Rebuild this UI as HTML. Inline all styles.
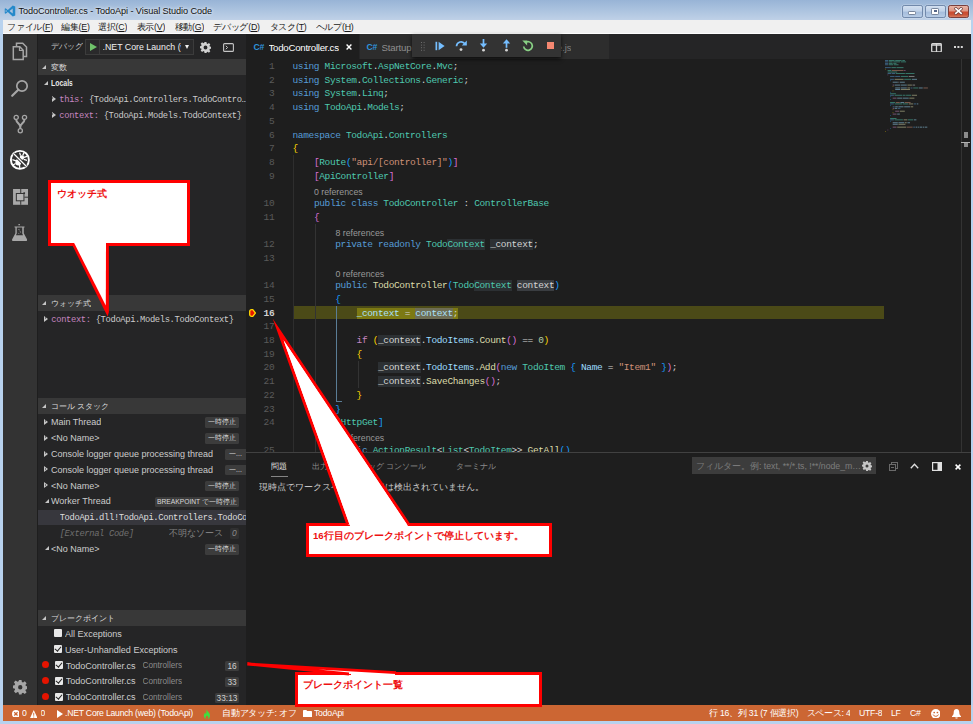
<!DOCTYPE html>
<html lang="ja">
<head>
<meta charset="utf-8">
<title>TodoController.cs - TodoApi - Visual Studio Code</title>
<style>
*{box-sizing:border-box;margin:0;padding:0}
html,body{width:973px;height:724px;overflow:hidden;background:#b8d2ee}
body{font-family:"Liberation Sans",sans-serif;font-size:9.4px;color:#ccc;position:relative}
.abs,.t,.m{position:absolute}
.t,.m{white-space:nowrap;line-height:16px;height:16px;overflow:hidden}
.m{font-family:"Liberation Mono",monospace}

/* ---------- window chrome ---------- */
#titlebar{left:0;top:0;width:973px;height:20px;background:linear-gradient(#98b4d6 0%,#a9c1de 45%,#bfd1e7 100%)}
#menubar{left:2.8px;top:19.8px;width:967.8px;height:14.2px;background:#f0f0f0;border-bottom:1px solid #fdfdfd}
#title{left:18.5px;top:3px;font-size:9.2px;color:#111;letter-spacing:-.1px;text-shadow:0 0 3px rgba(255,255,255,.9),0 0 5px rgba(255,255,255,.6);overflow:visible}
.menu{top:18.5px;color:#1a1a1a;font-size:8.8px;letter-spacing:-.2px}
.wbtn{top:5.3px;height:12.3px;border:1px solid #7189ab;border-radius:2.2px;background:linear-gradient(#d3e0f0 0%,#bfd1e8 48%,#a5bddc 54%,#b6cbe5 100%);box-shadow:0 0 0 .6px rgba(255,255,255,.35)}

/* ---------- main areas ---------- */
#vsc{left:2.8px;top:34px;width:967.8px;height:687px;background:#1e1e1e;overflow:hidden}
#activity{left:2.8px;top:34px;width:34.7px;height:672px;background:#333}
#sidebar{left:37.5px;top:34px;width:208.5px;height:672px;background:#252526;overflow:hidden}
#editor{left:246px;top:34px;width:724.6px;height:419px;background:#1e1e1e;overflow:hidden}
#panel{left:246px;top:452px;width:724.6px;height:254px;background:#1e1e1e;border-top:1px solid #414141}
#status{left:2.8px;top:705px;width:967.8px;height:16px;background:#cc6633}

/* ---------- activity bar ---------- */
.ico{position:absolute;fill:none;stroke:#a6a6a6;stroke-width:1.5;overflow:visible}
/* ---------- sidebar ---------- */
.hdr{position:absolute;left:37.5px;width:208.5px;height:16px;background:#383838}
.hdr .t{left:13.5px;top:.8px;color:#ddd;font-size:7.9px}
.tw{position:absolute;width:0;height:0;border-style:solid}
.tw.open{border-width:0 0 4.5px 4.5px;border-color:transparent transparent #c5c5c5 transparent}
.tw.closed{border-width:3.4px 0 3.4px 4px;border-color:transparent transparent transparent #c5c5c5}
.tw.closed:after{content:"";position:absolute;left:-3.3px;top:-1.6px;border-style:solid;border-width:1.6px 0 1.6px 1.9px;border-color:transparent transparent transparent #252526}
.sm{font-size:8.8px;letter-spacing:-.35px;color:#ccc;margin-top:.8px}
.pk{color:#c586c0}
.badge{position:absolute;height:10.5px;line-height:10.8px;margin-top:.5px;background:#3c3c3c;color:#dadada;font-size:7.1px;border-radius:1.5px;text-align:center;white-space:nowrap;overflow:hidden}
.cb{position:absolute;width:8px;height:8px;background:#e8e8e8;border-radius:1px}
.cb.on:after{content:"";position:absolute;left:2.4px;top:.2px;width:2.6px;height:5px;border:solid #222;border-width:0 1.5px 1.5px 0;transform:rotate(40deg)}
.bp{position:absolute;width:7px;height:7px;border-radius:50%;background:#e51400}
.dim{color:#8c8c8c}
.cs9{font-size:9px}
.bp9{font-size:9.05px}
.num{font-size:8.3px;color:#d0d0d0}

/* ---------- editor ---------- */
#tabs{left:246px;top:34px;width:724.6px;height:25px;background:#252526}
.tab{position:absolute;top:34px;height:25px}
.cs{position:absolute;font-size:8.7px;font-weight:bold;color:#2f93dc;letter-spacing:-.3px;line-height:16px}
.ln{position:absolute;left:246px;width:28.3px;text-align:right;font-family:"Liberation Mono",monospace;font-size:9.5px;letter-spacing:-.36px;color:#5a5a5a;height:13.7px;line-height:13.7px;top:calc(60px + var(--r)*13.7px)}
.cl{position:absolute;left:292.5px;font-family:"Liberation Mono",monospace;font-size:9.5px;letter-spacing:-.36px;color:#d4d4d4;white-space:pre;height:13.7px;line-height:13.7px;top:calc(60px + var(--r)*13.7px)}
.lens{position:absolute;font-size:8.75px;color:#999;white-space:nowrap;height:13.7px;line-height:13.7px;top:calc(62.3px + var(--r)*13.7px)}
.ig{position:absolute;width:1px;background:#333;top:calc(59.5px + var(--r)*13.7px);height:calc(var(--n)*13.7px)}
.k{color:#569cd6}.ty{color:#4ec9b0}.s{color:#ce9178}.n{color:#b5cea8}.c{color:#c586c0}.v{color:#9cdcfe}.f{color:#dcdcaa}
.b1{color:#ffd700}.b2{color:#da70d6}.b3{color:#179fff}
.hl{background:#2c3033}

/* ---------- panel / status / callouts ---------- */
.pt{font-size:8.4px;color:#8a8a8a;top:458px}
.st{color:#fff;font-size:8.7px;letter-spacing:-.24px;top:706px;line-height:15.5px;height:15.5px}
.call{position:absolute;background:#fff;border:3px solid #ff0000}
.ct{position:absolute;color:#ee1111;font-weight:bold;font-size:9.6px;white-space:nowrap;line-height:12px}
</style>
</head>
<body>

<!-- ================= WINDOW CHROME ================= -->
<div id="titlebar" class="abs"></div>
<svg class="abs" style="left:4px;top:5px" width="12" height="12" viewBox="0 0 24 24"><path fill="#2489ca" d="M17.5 1 7.6 10 3.3 6.7 1.5 7.6v8.8l1.8.9 4.3-3.3 9.9 9 5-2V3zM3.4 14.6V9.4L6 12zM17.4 16.9 11 12l6.4-4.9z"/></svg>
<div id="title" class="t">TodoController.cs - TodoApi - Visual Studio Code</div>
<div class="abs wbtn" style="left:902.2px;width:20.6px"></div>
<div class="abs" style="left:908.4px;top:11px;width:8px;height:3.6px;background:#fff;border:.9px solid #76849a;border-radius:1.2px"></div>
<div class="abs wbtn" style="left:924.9px;width:20.9px"></div>
<div class="abs" style="left:931.3px;top:8px;width:7.6px;height:6.6px;background:#fff;border:.9px solid #76849a;border-radius:1.2px"></div>
<div class="abs" style="left:933.6px;top:10.2px;width:3px;height:2.2px;background:#7d98c2;border:.6px solid #55678a"></div>
<div class="abs wbtn" style="left:947.6px;width:21.4px;border-color:#7a3f3c;background:linear-gradient(#e9b5a6 0%,#dc9482 47%,#cc4a2f 53%,#c9553a 80%,#d87e62 100%)"></div>
<svg class="abs" style="left:954px;top:7.3px" width="9" height="8" viewBox="0 0 10 9"><path d="M2 1.8 8 7.2M8 1.8 2 7.2" stroke="#6a3a36" stroke-width="3.4" stroke-linecap="square"/><path d="M2 1.8 8 7.2M8 1.8 2 7.2" stroke="#fff" stroke-width="1.9" stroke-linecap="square"/></svg>

<div id="menubar" class="abs"></div>
<div class="t menu" style="left:7px">ファイル(<u>F</u>)</div>
<div class="t menu" style="left:61px">編集(<u>E</u>)</div>
<div class="t menu" style="left:98px">選択(<u>C</u>)</div>
<div class="t menu" style="left:136.5px">表示(<u>V</u>)</div>
<div class="t menu" style="left:174.5px">移動(<u>G</u>)</div>
<div class="t menu" style="left:213px">デバッグ(<u>D</u>)</div>
<div class="t menu" style="left:269.5px">タスク(<u>T</u>)</div>
<div class="t menu" style="left:315.5px">ヘルプ(<u>H</u>)</div>
<div id="vsc" class="abs"></div>
<div id="activity" class="abs"></div>
<!-- files -->
<svg class="ico" style="left:12px;top:42px" width="16" height="19" viewBox="0 0 16 19"><path d="M4.5 4V1.2h6.2l3.8 3.8v9.5h-3"/><path d="M1.3 4.8h6.5l3.4 3.4v9.3H1.3z"/><path d="M7.5 5v3.5h3.5" stroke-width="1.2"/></svg>
<!-- search -->
<svg class="ico" style="left:10px;top:78px" width="20" height="20" viewBox="0 0 20 20"><circle cx="12" cy="8" r="5.2" stroke-width="1.7"/><path d="M8.3 11.7 2.2 17.8" stroke-width="2.2" stroke-linecap="round"/></svg>
<!-- git -->
<svg class="ico" style="left:12px;top:113px" width="17" height="22" viewBox="0 0 17 22"><circle cx="4.2" cy="4.4" r="2.1" stroke-width="1.3"/><circle cx="12.5" cy="4.4" r="2.1" stroke-width="1.3"/><circle cx="8.3" cy="17.8" r="2.1" stroke-width="1.3"/><path d="M4.2 6.5c0 3.5 4.1 4 4.1 7.5v1.7M12.5 6.5c0 3.5-4.2 4-4.2 7.5" stroke-width="2"/></svg>
<!-- debug (active) -->
<svg class="ico" style="left:9px;top:149.4px;stroke:#fff" width="22" height="22" viewBox="0 0 22 22"><circle cx="10.9" cy="10.9" r="9" stroke-width="1.9"/><ellipse cx="9.3" cy="13.3" rx="2.9" ry="3.3" fill="#fff" stroke="none"/><circle cx="12.9" cy="8.6" r="2.3" fill="#fff" stroke="none"/><path d="M11.6 6.6 10.6 3.6M13.7 6.5l1.3-2.9M15 8.3l3-.9M14.8 10.3l3.2 1M7 11.8l-3.6-1.2M6.6 14.5l-2.6 1.5M10.5 16l.3 3.3" stroke-width="1.3"/><path d="M4.7 4.7 17.3 17.3" stroke="#333" stroke-width="3.2"/><path d="M4.5 4.5 17.5 17.5" stroke-width="1.3"/></svg>
<!-- extensions -->
<svg class="abs" style="left:12.8px;top:188.8px" width="15.1" height="15.8" viewBox="0 0 15 15.8"><rect width="15" height="15.8" fill="#a8a8a8"/><path d="M7.7 0v5M7.7 11.5v4.3M11.3 8.2H15" stroke="#333" stroke-width="1"/><rect x="3.3" y="4.5" width="7.6" height="7.3" fill="#b4b4b4" stroke="#333" stroke-width="1"/><rect x="10.3" y="3.3" width="1.7" height="1.7" fill="#333"/></svg>
<!-- flask -->
<svg class="abs" style="left:11.8px;top:223.7px" width="15.2" height="17.3" viewBox="0 0 16 18"><path fill="#a8a8a8" fill-rule="evenodd" d="M6.8 0h1.5v1.3H6.8zM2.6 2.4h10.6v1.3h-.8v5.9l3.4 6.4c.4.9-.1 1.8-1 1.8H1.2c-.9 0-1.4-.9-1-1.8l3.4-6.4V3.7h-.8zM5 3.7v6.3l-.9 1.7h7.6l-.9-1.7V3.7z"/><path d="M7 5.2l.8 1.3M8.6 7.6l.5 1.3M6.6 9.3l.7.8" stroke="#a8a8a8" stroke-width=".9"/></svg>
<!-- gear -->
<svg class="abs" style="left:12.5px;top:680px" width="14.5" height="14.5" viewBox="0 0 16 16"><path fill="#a6a6a6" fill-rule="evenodd" d="M6.6 0h2.8l.4 2.2 1.3.55L13 1.5l2 2-1.3 1.9.55 1.3 2.2.4v2.8l-2.2.4-.55 1.3L15 13.5l-2 2-1.9-1.3-1.3.55L9.4 16H6.6l-.4-2.2-1.3-.55L3 14.5l-2-2 1.3-1.9-.55-1.3L-.45 8.9V6.1l2.2-.4.55-1.3L1 2.5l2-2 1.9 1.3 1.3-.55zM8 5.6a2.4 2.4 0 1 0 0 4.8 2.4 2.4 0 0 0 0-4.8z"/></svg>
<div id="sidebar" class="abs"></div>

<!-- debug header -->
<div class="t" style="left:51px;top:39px;font-size:7.9px;color:#ccc">デバッグ</div>
<div class="abs" style="left:85px;top:39px;width:108.5px;height:16px;background:#2a2a2b;border:1px solid #3c3c3c"></div>
<div class="abs" style="left:99px;top:40px;width:1px;height:14px;background:#3c3c3c"></div>
<div class="tw" style="left:89.5px;top:42.5px;border-width:4.5px 0 4.5px 7px;border-color:transparent transparent transparent #6fc36a"></div>
<div class="t" style="left:102.5px;top:39px;width:78px;font-size:8.8px;color:#f0f0f0">.NET Core Launch (web) (TodoApi)</div>
<div class="tw" style="left:184.5px;top:44.5px;border-width:4.5px 2.7px 0 2.7px;border-color:#f0f0f0 transparent transparent transparent"></div>
<svg class="abs" style="left:200px;top:41.5px" width="11" height="11" viewBox="0 0 16 16"><path fill="#d0d0d0" fill-rule="evenodd" d="M6.6 0h2.8l.4 2.2 1.3.55L13 1.5l2 2-1.3 1.9.55 1.3 2.2.4v2.8l-2.2.4-.55 1.3L15 13.5l-2 2-1.9-1.3-1.3.55L9.4 16H6.6l-.4-2.2-1.3-.55L3 14.5l-2-2 1.3-1.9-.55-1.3L-.45 8.9V6.1l2.2-.4.55-1.3L1 2.5l2-2 1.9 1.3 1.3-.55zM8 5.2a2.8 2.8 0 1 0 0 5.6 2.8 2.8 0 0 0 0-5.6z"/></svg>
<svg class="abs" style="left:222.5px;top:42.5px" width="11" height="9" viewBox="0 0 11 9"><rect x=".6" y=".6" width="9.8" height="7.8" rx="1" fill="none" stroke="#c5c5c5" stroke-width="1.1"/><path d="M2.8 2.8 4.6 4.5 2.8 6.2" fill="none" stroke="#c5c5c5" stroke-width="1"/></svg>

<!-- variables -->
<div class="hdr" style="top:59px"><div class="tw open" style="left:4.8px;top:5.9px"></div><div class="t">変数</div></div>
<div class="tw open" style="left:43.5px;top:80.5px"></div>
<div class="t" style="left:51px;top:75px;font-weight:bold;font-size:8.3px;transform:scaleX(.835);transform-origin:0 50%;color:#e8e8e8">Locals</div>
<div class="tw closed" style="left:51.5px;top:95.8px"></div>
<div class="m sm" style="left:59.3px;top:91px;width:186.7px"><span class="pk">this:</span> {TodoApi.Controllers.TodoContro…</div>
<div class="tw closed" style="left:51.5px;top:111.8px"></div>
<div class="m sm" style="left:59.3px;top:107px"><span class="pk">context:</span> {TodoApi.Models.TodoContext}</div>

<!-- watch -->
<div class="hdr" style="top:295px"><div class="tw open" style="left:4.8px;top:5.9px"></div><div class="t">ウォッチ式</div></div>
<div class="tw closed" style="left:43.8px;top:316px"></div>
<div class="m sm" style="left:51.3px;top:311px"><span class="pk">context:</span> {TodoApi.Models.TodoContext}</div>

<!-- call stack -->
<div class="hdr" style="top:398px"><div class="tw open" style="left:4.8px;top:5.9px"></div><div class="t">コール スタック</div></div>
<div class="abs" style="left:37.5px;top:509.5px;width:208.5px;height:15.5px;background:#37373d"></div>

<div class="tw closed" style="left:43.8px;top:418.8px"></div><div class="t cs9" style="left:51px;top:414px">Main Thread</div><div class="badge" style="left:205px;top:416.8px;width:34px">一時停止</div>
<div class="tw closed" style="left:43.8px;top:434.6px"></div><div class="t cs9" style="left:51px;top:430px">&lt;No Name&gt;</div><div class="badge" style="left:205px;top:432.6px;width:34px">一時停止</div>
<div class="tw closed" style="left:43.8px;top:450.5px"></div><div class="t cs9" style="left:51px;top:445.8px">Console logger queue processing thread</div><div class="badge" style="left:225px;top:448.5px;width:21px;border-radius:1.5px 0 0 1.5px">一...</div>
<div class="tw closed" style="left:43.8px;top:466.3px"></div><div class="t cs9" style="left:51px;top:461.6px">Console logger queue processing thread</div><div class="badge" style="left:225px;top:464.3px;width:21px;border-radius:1.5px 0 0 1.5px">一...</div>
<div class="tw closed" style="left:43.8px;top:482.2px"></div><div class="t cs9" style="left:51px;top:477.5px">&lt;No Name&gt;</div><div class="badge" style="left:205px;top:480.2px;width:34px">一時停止</div>
<div class="tw open" style="left:44.5px;top:498.5px"></div><div class="t cs9" style="left:51px;top:493.3px">Worker Thread</div><div class="badge" style="left:155px;top:496px;width:84px;font-size:6.7px">BREAKPOINT <span style="font-size:7.1px">で一時停止</span></div>
<div class="m sm" style="left:59.7px;top:509.2px;width:186.3px;color:#ddd">TodoApi.dll!TodoApi.Controllers.TodoController..ctor</div>
<div class="m sm" style="left:59.7px;top:525px;font-style:italic;color:#707070">[External Code]</div>
<div class="t" style="left:169px;top:525px;color:#828282;font-size:9.2px">不明なソース</div><div class="badge" style="left:229.5px;top:527.8px;width:9.5px;color:#8a8a8a;font-style:italic;font-size:8.4px;background:#303031">0</div>
<div class="tw open" style="left:44.5px;top:546px"></div><div class="t cs9" style="left:51px;top:540.9px">&lt;No Name&gt;</div><div class="badge" style="left:205px;top:543.6px;width:34px">一時停止</div>

<!-- breakpoints -->
<div class="hdr" style="top:610px"><div class="tw open" style="left:4.8px;top:5.9px"></div><div class="t">ブレークポイント</div></div>
<div class="cb" style="left:54px;top:629.2px"></div><div class="t bp9" style="left:65px;top:625.5px">All Exceptions</div>
<div class="cb on" style="left:54px;top:645px"></div><div class="t bp9" style="left:65px;top:641.5px">User-Unhandled Exceptions</div>
<div class="bp" style="left:41.7px;top:661px"></div><div class="cb on" style="left:54.5px;top:661px"></div><div class="t bp9" style="left:65.7px;top:657.5px">TodoController.cs</div><div class="t dim" style="left:142.5px;top:657.8px;font-size:8.2px">Controllers</div><div class="badge num" style="left:225px;top:660.2px;width:14px">16</div>
<div class="bp" style="left:41.7px;top:677px"></div><div class="cb on" style="left:54.5px;top:677px"></div><div class="t bp9" style="left:65.7px;top:673.3px">TodoController.cs</div><div class="t dim" style="left:142.5px;top:673.6px;font-size:8.2px">Controllers</div><div class="badge num" style="left:225px;top:676px;width:14px">33</div>
<div class="bp" style="left:41.7px;top:692.8px"></div><div class="cb on" style="left:54.5px;top:692.8px"></div><div class="t bp9" style="left:65.7px;top:689.3px">TodoController.cs</div><div class="t dim" style="left:142.5px;top:689.6px;font-size:8.2px">Controllers</div><div class="badge num" style="left:215px;top:692px;width:24px">33:13</div>
<div id="editor" class="abs"></div>
<div id="tabs" class="abs"></div>
<div class="tab" style="left:246px;width:113px;background:#1e1e1e"></div>
<div class="cs" style="left:253.5px;top:39px">C#</div>
<div class="t" style="left:268.5px;top:39.5px;font-size:9.7px;color:#fff;letter-spacing:-.27px">TodoController.cs</div>
<svg class="abs" style="left:345.5px;top:44px" width="6" height="6" viewBox="0 0 6 6"><path d="M.6.6 5.4 5.4M5.4.6.6 5.4" stroke="#fff" stroke-width="1.4"/></svg>
<div class="tab" style="left:359.5px;width:249px;background:#2d2d2d"></div>
<div class="cs" style="left:366.5px;top:39px">C#</div>
<div class="t" style="left:381.5px;top:39.5px;font-size:9.7px;letter-spacing:-.2px;color:#8f8f8f">Startup.cs</div>
<div class="t" style="left:557px;top:39.5px;font-size:9.3px;color:#7f7f7f">e.js</div>
<!-- editor actions -->
<svg class="abs" style="left:931px;top:42.5px" width="11" height="9.5" viewBox="0 0 11 9.5"><rect x=".7" y=".7" width="9.6" height="8.1" rx=".8" fill="none" stroke="#d8d8d8" stroke-width="1.3"/><path d="M.7 2h9.6M5.5 1v8" stroke="#d8d8d8" stroke-width="1.3"/></svg>
<div class="abs" style="left:954.3px;top:46px;width:2px;height:2px;background:#d8d8d8;box-shadow:3.4px 0 #d8d8d8,6.8px 0 #d8d8d8"></div>

<!-- code -->
<div class="abs" style="left:292.5px;top:305.8px;width:591px;height:13.7px;background:#4b4a17"></div>
<div class="ig" style="left:292.9px;--r:7;--n:22;background:#2e2e2e"></div>
<div class="ig" style="left:315px;--r:12;--n:17"></div>
<div class="ig" style="left:336.3px;--r:18;--n:7;background:#5a7d96"></div>
<div class="abs" style="left:336.3px;top:401px;width:6px;height:1px;background:#5a7d96"></div>
<div class="ig" style="left:357.6px;--r:22;--n:2"></div>
<div class="ln" style="--r:0">1</div>
<div class="cl" style="--r:0"><span class="k">using</span> <span class="ty">Microsoft</span>.<span class="ty">AspNetCore</span>.<span class="ty">Mvc</span>;</div>
<div class="ln" style="--r:1">2</div>
<div class="cl" style="--r:1"><span class="k">using</span> <span class="ty">System</span>.<span class="ty">Collections</span>.<span class="ty">Generic</span>;</div>
<div class="ln" style="--r:2">3</div>
<div class="cl" style="--r:2"><span class="k">using</span> <span class="ty">System</span>.<span class="ty">Linq</span>;</div>
<div class="ln" style="--r:3">4</div>
<div class="cl" style="--r:3"><span class="k">using</span> <span class="ty">TodoApi</span>.<span class="ty">Models</span>;</div>
<div class="ln" style="--r:4">5</div>
<div class="ln" style="--r:5">6</div>
<div class="cl" style="--r:5"><span class="k">namespace</span> <span class="ty">TodoApi</span>.<span class="ty">Controllers</span></div>
<div class="ln" style="--r:6">7</div>
<div class="cl" style="--r:6"><span class="b1">{</span></div>
<div class="ln" style="--r:7">8</div>
<div class="cl" style="--r:7">    <span class="b2">[</span><span class="ty">Route</span><span class="b3">(</span><span class="s">"api/[controller]"</span><span class="b3">)</span><span class="b2">]</span></div>
<div class="ln" style="--r:8">9</div>
<div class="cl" style="--r:8">    <span class="b2">[</span><span class="ty">ApiController</span><span class="b2">]</span></div>
<div class="ln" style="--r:10">10</div>
<div class="cl" style="--r:10">    <span class="k">public</span> <span class="k">class</span> <span class="ty">TodoController</span> : <span class="ty">ControllerBase</span></div>
<div class="ln" style="--r:11">11</div>
<div class="cl" style="--r:11">    <span class="b2">{</span></div>
<div class="ln" style="--r:13">12</div>
<div class="cl" style="--r:13">        <span class="k">private</span> <span class="k">readonly</span> <span class="ty">Todo<span class="hl">Context</span></span> <span class="hl">_context</span>;</div>
<div class="ln" style="--r:14">13</div>
<div class="ln" style="--r:16">14</div>
<div class="cl" style="--r:16">        <span class="k">public</span> <span class="f">TodoController</span><span class="b3">(</span><span class="ty">Todo<span class="hl">Context</span></span> <span style="background:#3a3d41">context</span><span class="b3">)</span></div>
<div class="ln" style="--r:17">15</div>
<div class="cl" style="--r:17">        <span class="b3">{</span></div>
<div class="ln" style="--r:18;color:#d0d0d0;font-weight:bold">16</div>
<div class="cl" style="--r:18">            <span style="background:#7c7913"><span style="color:#a9e1fb">_context</span> = <span style="background:#6e6d54;color:#a9e1fb">context</span>;</span></div>
<div class="ln" style="--r:19">17</div>
<div class="ln" style="--r:20">18</div>
<div class="cl" style="--r:20">            <span class="c">if</span> <span class="b1">(</span><span class="hl">_context</span>.<span class="v">TodoItems</span>.<span class="f">Count</span><span class="b2">()</span> == <span class="n">0</span><span class="b1">)</span></div>
<div class="ln" style="--r:21">19</div>
<div class="cl" style="--r:21">            <span class="b1">{</span></div>
<div class="ln" style="--r:22">20</div>
<div class="cl" style="--r:22">                <span class="hl">_context</span>.<span class="v">TodoItems</span>.<span class="f">Add</span><span class="b2">(</span><span class="k">new</span> <span class="ty">TodoItem</span> <span class="b3">{</span> <span class="v">Name</span> = <span class="s">"Item1"</span> <span class="b3">}</span><span class="b2">)</span>;</div>
<div class="ln" style="--r:23">21</div>
<div class="cl" style="--r:23">                <span class="hl">_context</span>.<span class="f">SaveChanges</span><span class="b2">()</span>;</div>
<div class="ln" style="--r:24">22</div>
<div class="cl" style="--r:24">            <span class="b1">}</span></div>
<div class="ln" style="--r:25">23</div>
<div class="cl" style="--r:25">        <span class="b3">}</span></div>
<div class="ln" style="--r:26">24</div>
<div class="cl" style="--r:26">        <span class="b3">[</span><span class="ty">HttpGet</span><span class="b3">]</span></div>
<div class="ln" style="--r:28">25</div>
<div class="cl" style="--r:28">        <span class="k">public</span> <span class="ty">ActionResult</span>&lt;<span class="ty">List</span>&lt;<span class="ty">TodoItem</span>&gt;&gt; <span class="f">GetAll</span><span class="b3">()</span></div>
<div class="lens" style="left:314px;--r:9">0 references</div>
<div class="lens" style="left:335.5px;--r:12">8 references</div>
<div class="lens" style="left:335.5px;--r:15">0 references</div>
<div class="lens" style="left:335.5px;--r:27">0 references</div>
<!-- breakpoint glyph -->
<svg class="abs" style="left:249.2px;top:309px" width="7" height="8" viewBox="0 0 7 8"><path d="M2.6.7h1.2L6.4 4 3.8 7.3H2.6A1.9 1.9 0 0 1 .7 5.4V2.6A1.9 1.9 0 0 1 2.6.7z" fill="#e51400" stroke="#ffd800" stroke-width="1.3" stroke-linejoin="round"/></svg>

<!-- minimap + overview ruler -->
<div class="abs" style="left:961px;top:59px;width:1px;height:394px;background:#333"></div>
<div class="abs" style="left:964px;top:132px;width:4px;height:5.5px;background:#8a8a8a"></div>
<div class="abs" style="left:961px;top:141.5px;width:9px;height:1px;background:#b0b0b0"></div>
<div class="abs" style="left:964px;top:143px;width:4px;height:3.5px;background:#8a8a8a"></div>

<svg class="abs" style="left:884.5px;top:59.5px;opacity:.6" width="64" height="76" viewBox="0 0 64 76"><rect x="0" y="0" width="3.2" height=".85" fill="#569cd6"/><rect x="3.8" y="0" width="5.8" height=".85" fill="#4ec9b0"/><rect x="10.2" y="0" width="6.4" height=".85" fill="#4ec9b0"/><rect x="17.3" y="0" width="2.6" height=".85" fill="#4ec9b0"/><rect x="0" y="1.45" width="3.2" height=".85" fill="#569cd6"/><rect x="3.8" y="1.45" width="3.8" height=".85" fill="#4ec9b0"/><rect x="8.3" y="1.45" width="7" height=".85" fill="#4ec9b0"/><rect x="16" y="1.45" width="5.1" height=".85" fill="#4ec9b0"/><rect x="0" y="2.9" width="3.2" height=".85" fill="#569cd6"/><rect x="3.8" y="2.9" width="3.8" height=".85" fill="#4ec9b0"/><rect x="8.3" y="2.9" width="3.2" height=".85" fill="#4ec9b0"/><rect x="0" y="4.35" width="3.2" height=".85" fill="#569cd6"/><rect x="3.8" y="4.35" width="4.5" height=".85" fill="#4ec9b0"/><rect x="9" y="4.35" width="4.5" height=".85" fill="#4ec9b0"/><rect x="0" y="7.25" width="5.8" height=".85" fill="#569cd6"/><rect x="6.4" y="7.25" width="4.5" height=".85" fill="#4ec9b0"/><rect x="11.5" y="7.25" width="7" height=".85" fill="#4ec9b0"/><rect x="0" y="8.7" width="0.6" height=".85" fill="#ffd700"/><rect x="2.6" y="10.15" width="3.8" height=".85" fill="#4ec9b0"/><rect x="7" y="10.15" width="11.5" height=".85" fill="#ce9178"/><rect x="19.2" y="10.15" width="1.3" height=".85" fill="#da70d6"/><rect x="2.6" y="11.6" width="9.6" height=".85" fill="#4ec9b0"/><rect x="2.6" y="13.05" width="3.8" height=".85" fill="#569cd6"/><rect x="7" y="13.05" width="3.2" height=".85" fill="#569cd6"/><rect x="10.9" y="13.05" width="9" height=".85" fill="#4ec9b0"/><rect x="20.5" y="13.05" width="9" height=".85" fill="#4ec9b0"/><rect x="2.6" y="14.5" width="0.6" height=".85" fill="#da70d6"/><rect x="5.1" y="15.95" width="4.5" height=".85" fill="#569cd6"/><rect x="10.2" y="15.95" width="5.1" height=".85" fill="#569cd6"/><rect x="16" y="15.95" width="7" height=".85" fill="#4ec9b0"/><rect x="23.7" y="15.95" width="5.8" height=".85" fill="#d4d4d4"/><rect x="5.1" y="18.85" width="3.8" height=".85" fill="#569cd6"/><rect x="9.6" y="18.85" width="9" height=".85" fill="#dcdcaa"/><rect x="19.2" y="18.85" width="7" height=".85" fill="#4ec9b0"/><rect x="26.9" y="18.85" width="5.1" height=".85" fill="#9cdcfe"/><rect x="5.1" y="20.3" width="0.6" height=".85" fill="#179fff"/><rect x="7.7" y="21.75" width="5.1" height=".85" fill="#9cdcfe"/><rect x="13.4" y="21.75" width="0.6" height=".85" fill="#d4d4d4"/><rect x="14.7" y="21.75" width="5.1" height=".85" fill="#9cdcfe"/><rect x="7.7" y="24.65" width="1.3" height=".85" fill="#c586c0"/><rect x="9.6" y="24.65" width="5.8" height=".85" fill="#9cdcfe"/><rect x="16" y="24.65" width="5.8" height=".85" fill="#9cdcfe"/><rect x="22.4" y="24.65" width="4.5" height=".85" fill="#dcdcaa"/><rect x="27.5" y="24.65" width="2.6" height=".85" fill="#d4d4d4"/><rect x="7.7" y="26.1" width="0.6" height=".85" fill="#ffd700"/><rect x="10.2" y="27.55" width="5.1" height=".85" fill="#9cdcfe"/><rect x="16" y="27.55" width="5.8" height=".85" fill="#9cdcfe"/><rect x="22.4" y="27.55" width="2.6" height=".85" fill="#dcdcaa"/><rect x="25.6" y="27.55" width="1.9" height=".85" fill="#569cd6"/><rect x="28.2" y="27.55" width="5.1" height=".85" fill="#4ec9b0"/><rect x="33.9" y="27.55" width="3.8" height=".85" fill="#9cdcfe"/><rect x="38.4" y="27.55" width="4.5" height=".85" fill="#ce9178"/><rect x="10.2" y="29" width="5.1" height=".85" fill="#9cdcfe"/><rect x="16" y="29" width="9" height=".85" fill="#dcdcaa"/><rect x="7.7" y="30.45" width="0.6" height=".85" fill="#ffd700"/><rect x="5.1" y="31.9" width="0.6" height=".85" fill="#179fff"/><rect x="5.1" y="33.35" width="5.8" height=".85" fill="#4ec9b0"/><rect x="5.1" y="34.8" width="3.8" height=".85" fill="#569cd6"/><rect x="9.6" y="34.8" width="7.7" height=".85" fill="#4ec9b0"/><rect x="17.9" y="34.8" width="2.6" height=".85" fill="#4ec9b0"/><rect x="21.1" y="34.8" width="5.1" height=".85" fill="#4ec9b0"/><rect x="26.9" y="34.8" width="5.1" height=".85" fill="#dcdcaa"/><rect x="5.1" y="36.25" width="0.6" height=".85" fill="#179fff"/><rect x="7.7" y="37.7" width="3.8" height=".85" fill="#c586c0"/><rect x="12.2" y="37.7" width="5.1" height=".85" fill="#9cdcfe"/><rect x="17.9" y="37.7" width="5.8" height=".85" fill="#9cdcfe"/><rect x="24.3" y="37.7" width="5.1" height=".85" fill="#dcdcaa"/><rect x="5.1" y="39.15" width="0.6" height=".85" fill="#179fff"/><rect x="5.1" y="42.05" width="5.1" height=".85" fill="#4ec9b0"/><rect x="10.9" y="42.05" width="3.8" height=".85" fill="#ce9178"/><rect x="15.4" y="42.05" width="3.8" height=".85" fill="#9cdcfe"/><rect x="19.8" y="42.05" width="5.8" height=".85" fill="#ce9178"/><rect x="5.1" y="43.5" width="3.8" height=".85" fill="#569cd6"/><rect x="9.6" y="43.5" width="7.7" height=".85" fill="#4ec9b0"/><rect x="17.9" y="43.5" width="5.1" height=".85" fill="#4ec9b0"/><rect x="23.7" y="43.5" width="4.5" height=".85" fill="#dcdcaa"/><rect x="28.8" y="43.5" width="2.6" height=".85" fill="#569cd6"/><rect x="32" y="43.5" width="1.3" height=".85" fill="#9cdcfe"/><rect x="5.1" y="44.95" width="0.6" height=".85" fill="#179fff"/><rect x="7.7" y="46.4" width="1.9" height=".85" fill="#569cd6"/><rect x="10.2" y="46.4" width="2.6" height=".85" fill="#9cdcfe"/><rect x="13.4" y="46.4" width="5.1" height=".85" fill="#9cdcfe"/><rect x="19.2" y="46.4" width="5.8" height=".85" fill="#9cdcfe"/><rect x="25.6" y="46.4" width="2.6" height=".85" fill="#dcdcaa"/><rect x="7.7" y="47.85" width="1.3" height=".85" fill="#c586c0"/><rect x="9.6" y="47.85" width="2.6" height=".85" fill="#9cdcfe"/><rect x="12.8" y="47.85" width="2.6" height=".85" fill="#569cd6"/><rect x="7.7" y="49.3" width="0.6" height=".85" fill="#ffd700"/><rect x="10.2" y="50.75" width="3.8" height=".85" fill="#c586c0"/><rect x="14.7" y="50.75" width="5.1" height=".85" fill="#dcdcaa"/><rect x="7.7" y="52.2" width="0.6" height=".85" fill="#ffd700"/><rect x="7.7" y="53.65" width="3.8" height=".85" fill="#c586c0"/><rect x="12.2" y="53.65" width="2.6" height=".85" fill="#9cdcfe"/><rect x="5.1" y="55.1" width="0.6" height=".85" fill="#179fff"/><rect x="5.1" y="58" width="6.4" height=".85" fill="#4ec9b0"/><rect x="5.1" y="59.45" width="3.8" height=".85" fill="#569cd6"/><rect x="9.6" y="59.45" width="8.3" height=".85" fill="#4ec9b0"/><rect x="18.6" y="59.45" width="3.8" height=".85" fill="#dcdcaa"/><rect x="23" y="59.45" width="5.1" height=".85" fill="#4ec9b0"/><rect x="28.8" y="59.45" width="2.6" height=".85" fill="#9cdcfe"/><rect x="5.1" y="60.9" width="0.6" height=".85" fill="#179fff"/><rect x="7.7" y="62.35" width="5.1" height=".85" fill="#9cdcfe"/><rect x="13.4" y="62.35" width="5.8" height=".85" fill="#9cdcfe"/><rect x="19.8" y="62.35" width="1.9" height=".85" fill="#dcdcaa"/><rect x="22.4" y="62.35" width="2.6" height=".85" fill="#9cdcfe"/><rect x="7.7" y="63.8" width="5.1" height=".85" fill="#9cdcfe"/><rect x="13.4" y="63.8" width="7" height=".85" fill="#dcdcaa"/><rect x="7.7" y="66.7" width="3.8" height=".85" fill="#c586c0"/><rect x="12.2" y="66.7" width="9" height=".85" fill="#dcdcaa"/><rect x="21.8" y="66.7" width="5.8" height=".85" fill="#ce9178"/><rect x="28.2" y="66.7" width="1.9" height=".85" fill="#569cd6"/><rect x="30.7" y="66.7" width="1.3" height=".85" fill="#9cdcfe"/><rect x="32.6" y="66.7" width="1.3" height=".85" fill="#9cdcfe"/><rect x="34.6" y="66.7" width="2.6" height=".85" fill="#9cdcfe"/><rect x="37.8" y="66.7" width="1.3" height=".85" fill="#9cdcfe"/><rect x="39.7" y="66.7" width="2.6" height=".85" fill="#9cdcfe"/><rect x="5.1" y="68.15" width="0.6" height=".85" fill="#179fff"/><rect x="2.6" y="69.6" width="0.6" height=".85" fill="#da70d6"/><rect x="0" y="71.05" width="0.6" height=".85" fill="#ffd700"/></svg>
<!-- floating debug toolbar -->
<div class="abs" style="left:412px;top:34px;width:149px;height:22.5px;background:#333;box-shadow:0 1.5px 4px rgba(0,0,0,.75)"></div>
<div class="abs" style="left:420.5px;top:41.5px;width:1.2px;height:1.2px;background:#6d6d6d;box-shadow:2.6px 0 #6d6d6d,0 2.6px #6d6d6d,2.6px 2.6px #6d6d6d,0 5.2px #6d6d6d,2.6px 5.2px #6d6d6d,0 7.8px #6d6d6d,2.6px 7.8px #6d6d6d"></div>
<svg class="abs" style="left:434.7px;top:40.5px" width="10" height="10" viewBox="0 0 10 10"><rect x=".5" y=".8" width="1.7" height="8.4" fill="#75beff"/><path d="M3.6.8 9.6 5 3.6 9.2z" fill="#75beff"/></svg>
<svg class="abs" style="left:455px;top:39px" width="13" height="13" viewBox="0 0 13 13"><path d="M1.5 7.2A4.6 4.6 0 0 1 10 5" fill="none" stroke="#75beff" stroke-width="1.7"/><path d="M11.8 1.6v5H6.8z" fill="#75beff"/><circle cx="6" cy="10.6" r="1.4" fill="#d4d4d4"/></svg>
<svg class="abs" style="left:479px;top:39px" width="9" height="13" viewBox="0 0 9 13"><path d="M4.5 0v6" stroke="#75beff" stroke-width="1.7"/><path d="M.8 4.5h7.4L4.5 8.8z" fill="#75beff"/><circle cx="4.5" cy="11.2" r="1.4" fill="#d4d4d4"/></svg>
<svg class="abs" style="left:501.7px;top:39px" width="9" height="13" viewBox="0 0 9 13"><path d="M4.5 3.5v5.3" stroke="#75beff" stroke-width="1.7"/><path d="M.8 4.5h7.4L4.5.2z" fill="#75beff"/><circle cx="4.5" cy="11.2" r="1.4" fill="#d4d4d4"/></svg>
<svg class="abs" style="left:522px;top:39.5px" width="12" height="12" viewBox="0 0 12 12"><path d="M3.3 2.6A4.3 4.3 0 1 1 1.7 6.5" fill="none" stroke="#89d185" stroke-width="1.7"/><path d="M.3.6h4.8v4.8z" fill="#89d185"/></svg>
<div class="abs" style="left:546.6px;top:41.8px;width:7.6px;height:7.6px;background:#f48771"></div>
<div id="panel" class="abs"></div>
<div class="t pt" style="left:270.5px;color:#e7e7e7">問題</div>
<div class="abs" style="left:270.5px;top:476px;width:17.5px;height:1px;background:#858585"></div>
<div class="t pt" style="left:311.5px">出力</div>
<div class="t pt" style="left:352px">デバッグ コンソール</div>
<div class="t pt" style="left:455.5px">ターミナル</div>
<div class="t" style="left:259px;top:478.5px;font-size:8.55px;color:#ccc">現時点でワークスペースの問題は検出されていません。</div>
<div class="abs" style="left:691.5px;top:456.5px;width:184.5px;height:17.5px;background:#3c3c3c"></div>
<div class="t" style="left:696px;top:457.5px;width:165.5px;font-size:8.7px;color:#7d7d7d;text-overflow:ellipsis">フィルター。例: text, **/*.ts, !**/node_modules/**</div>
<svg class="abs" style="left:862px;top:460.5px" width="10" height="10" viewBox="0 0 16 16"><path fill="#c5c5c5" fill-rule="evenodd" d="M6.6 0h2.8l.4 2.2 1.3.55L13 1.5l2 2-1.3 1.9.55 1.3 2.2.4v2.8l-2.2.4-.55 1.3L15 13.5l-2 2-1.9-1.3-1.3.55L9.4 16H6.6l-.4-2.2-1.3-.55L3 14.5l-2-2 1.3-1.9-.55-1.3L-.45 8.9V6.1l2.2-.4.55-1.3L1 2.5l2-2 1.9 1.3 1.3-.55zM8 5.6a2.4 2.4 0 1 0 0 4.8 2.4 2.4 0 0 0 0-4.8z"/></svg>
<svg class="abs" style="left:889px;top:461.5px" width="9" height="9" viewBox="0 0 9 9"><rect x="2.5" y=".5" width="6" height="6" fill="none" stroke="#6a6a6a"/><rect x=".5" y="2.5" width="6" height="6" fill="#1e1e1e" stroke="#6a6a6a"/><path d="M2 5.5h3" stroke="#6a6a6a"/></svg>
<svg class="abs" style="left:909.5px;top:463px" width="9" height="6" viewBox="0 0 9 6"><path d="M.8 5.2 4.5 1.2 8.2 5.2" fill="none" stroke="#e0e0e0" stroke-width="1.3"/></svg>
<svg class="abs" style="left:931.5px;top:462px" width="10" height="9" viewBox="0 0 10 9"><rect x=".6" y=".6" width="8.8" height="7.8" fill="none" stroke="#e0e0e0" stroke-width="1.2"/><rect x="5.5" y=".6" width="3.9" height="7.8" fill="#e0e0e0"/></svg>
<svg class="abs" style="left:954.5px;top:463.5px" width="6" height="6" viewBox="0 0 6 6"><path d="M.6.6 5.4 5.4M5.4.6.6 5.4" stroke="#fff" stroke-width="1.5"/></svg>
<div id="status" class="abs"></div>
<svg class="abs" style="left:11.5px;top:709.6px" width="7.8" height="7.8" viewBox="0 0 8 8"><circle cx="4" cy="4" r="4" fill="#fff"/><path d="M2.3 2.3 5.7 5.7M5.7 2.3 2.3 5.7" stroke="#cc6633" stroke-width="1.25"/></svg>
<div class="t st" style="left:22px">0</div>
<svg class="abs" style="left:29.8px;top:709.6px" width="7.5" height="8.2" viewBox="0 0 8.5 8" preserveAspectRatio="none"><path d="M4.25 0 8.5 8H0z" fill="#fff"/><path d="M4.25 2.8v2.8M4.25 6.3v1" stroke="#cc6633" stroke-width="1"/></svg>
<div class="t st" style="left:40.5px">0</div>
<div class="tw" style="left:57px;top:709.5px;border-width:4px 0 4px 6px;border-color:transparent transparent transparent #fff"></div>
<div class="t st" style="left:65px">.NET Core Launch (web) (TodoApi)</div>
<svg class="abs" style="left:202.5px;top:708.5px" width="8" height="10" viewBox="0 0 8 10"><path d="M3.2 0c.6 2.2 3.8 3.4 3.8 6.4C7 8.6 5.6 10 4 10S.8 8.7.8 6.7c0-1.5 1-2.3 1.3-3.5.5.7.6 1.3.6 2C3.6 4 3.7 1.8 3.2 0z" fill="#3fe03f"/><path d="M4 10c-.8 0-1.4-.6-1.4-1.5 0-.9.9-1.3 1.3-2.3.5 1 1.5 1.4 1.5 2.4C5.4 9.4 4.8 10 4 10z" fill="#cc6633"/></svg>
<div class="t st" style="left:222px">自動アタッチ: オフ</div>
<svg class="abs" style="left:303px;top:709.5px" width="9" height="7.5" viewBox="0 0 9 7.5"><path d="M0 .8C0 .4.3 0 .8 0h2.5l.9 1h4c.4 0 .8.4.8.8v5c0 .4-.4.7-.8.7H.8C.3 7.5 0 7.2 0 6.8z" fill="#fff"/></svg>
<div class="t st" style="left:314px">TodoApi</div>
<div class="t st" style="left:709px">行 16、列 31 (7 個選択)</div>
<div class="t st" style="left:806.5px">スペース: 4</div>
<div class="t st" style="left:859px">UTF-8</div>
<div class="t st" style="left:891px">LF</div>
<div class="t st" style="left:910px">C#</div>
<svg class="abs" style="left:930.8px;top:708.6px" width="9.6" height="9.6" viewBox="0 0 9 9"><circle cx="4.5" cy="4.5" r="4.5" fill="#fff"/><circle cx="3" cy="3.3" r=".8" fill="#cc6633"/><circle cx="6" cy="3.3" r=".8" fill="#cc6633"/><path d="M2 5.2a2.7 2.7 0 0 0 5 0" fill="none" stroke="#cc6633" stroke-width=".9"/></svg>
<svg class="abs" style="left:951.5px;top:709px" width="9" height="9.5" viewBox="0 0 9 9.5"><path d="M4.5 0C6.5 0 7.3 1.6 7.3 3.6c0 2 .7 2.8 1.7 3.6v.8H0v-.8C1 6.4 1.7 5.6 1.7 3.6 1.7 1.6 2.5 0 4.5 0zM3.3 8.4h2.4a1.2 1.2 0 0 1-2.4 0z" fill="#fff"/></svg>

<!-- ================= ANNOTATION CALLOUTS ================= -->
<div class="call" style="left:47.8px;top:180.1px;width:142.5px;height:66.2px"></div>
<div class="call" style="left:306.1px;top:523.2px;width:246px;height:34.2px"></div>
<div class="call" style="left:295.1px;top:672px;width:247.2px;height:35px"></div>
<div class="abs" style="left:351px;top:671.5px;width:44px;height:4px;background:#fff"></div>
<svg class="abs" style="left:0;top:0" width="973" height="724" viewBox="0 0 973 724">
<!-- watch callout tail -->
<path d="M72.9 246.3 107.6 316.6 108.9 312 108.9 243 71.3 243z" fill="#ff0000"/>
<path d="M73.9 242.5 105.8 305.6 106 242.5z" fill="#fff"/>
<!-- line-16 callout tail -->
<path d="M347.93 524.5 278.15 329.5 408.79 524.5" fill="#fff" stroke="#ff0000" stroke-width="3" stroke-linejoin="miter" stroke-miterlimit="12"/>
<path d="M350.4 527 283.6 340.3 408.7 527z" fill="#fff"/>
<!-- breakpoint-list callout tail -->
<path d="M349 674 247.3 664 396 672.6" fill="#fff" stroke="#ff0000" stroke-width="2.8" stroke-linejoin="bevel"/>
</svg>
<div class="ct" style="left:57px;top:187.5px">ウオッチ式</div>
<div class="ct" style="left:313px;top:529.5px">16行目のブレークポイントで停止しています。</div>
<div class="ct" style="left:303px;top:678.5px">ブレークポイント一覧</div>

</body>
</html>
